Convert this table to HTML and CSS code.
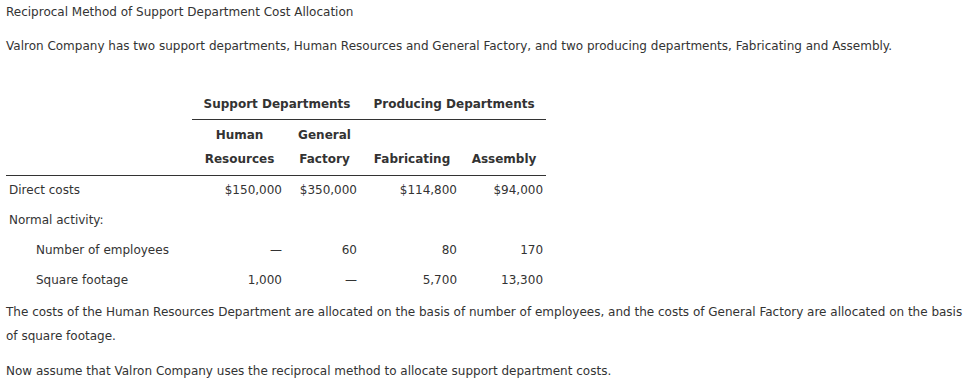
FILE: index.html
```html
<html lang="en">
<head>
<meta charset="UTF-8">
<meta name="viewport" content="width=device-width, initial-scale=1.0">
<title>Reciprocal Method</title>
<link rel="stylesheet" href="styles.css">
</head>
<body>
<div class="problem">
  <p class="title">Reciprocal Method of Support Department Cost Allocation</p>
  <p class="intro">Valron Company has two support departments, Human Resources and General Factory, and two producing departments, Fabricating and Assembly.</p>

  <table class="costs">
    <colgroup>
      <col class="c-label">
      <col class="c-hr">
      <col class="c-gf">
      <col class="c-fab">
      <col class="c-asm">
    </colgroup>
    <tr class="group-row">
      <th></th>
      <th colspan="2" class="group">Support Departments</th>
      <th colspan="2" class="group">Producing Departments</th>
    </tr>
    <tr class="dept-row">
      <th></th>
      <th>Human<br>Resources</th>
      <th>General<br>Factory</th>
      <th>Fabricating</th>
      <th>Assembly</th>
    </tr>
    <tr>
      <td>Direct costs</td>
      <td class="num">$150,000</td>
      <td class="num">$350,000</td>
      <td class="num">$114,800</td>
      <td class="num">$94,000</td>
    </tr>
    <tr>
      <td colspan="5">Normal activity:</td>
    </tr>
    <tr>
      <td class="indent">Number of employees</td>
      <td class="num">&mdash;</td>
      <td class="num">60</td>
      <td class="num">80</td>
      <td class="num">170</td>
    </tr>
    <tr>
      <td class="indent">Square footage</td>
      <td class="num">1,000</td>
      <td class="num">&mdash;</td>
      <td class="num">5,700</td>
      <td class="num">13,300</td>
    </tr>
  </table>

  <p class="note">The costs of the Human Resources Department are allocated on the basis of number of employees, and the costs of General Factory are allocated on the basis of square footage.</p>
  <p class="note last">Now assume that Valron Company uses the reciprocal method to allocate support department costs.</p>
</div>
</body>
</html>
```

FILE: styles.css
```css
body {
  font-family: Verdana, "DejaVu Sans", sans-serif;
  font-size: 12px;
  color: #333;
  background-color: #fff;
  margin: 0;
  padding: 0 2px 0 6px;
}

.problem p {
  margin: 0;
  line-height: 24px;
}

.problem .intro {
  margin-top: 10px;
}

.costs {
  font-family: inherit;
  font-size: 12px;
  color: #333;
  border-collapse: collapse;
  table-layout: fixed;
  width: 540px;
  margin-top: 31px;
}

.c-label { width: 186px; }
.c-hr { width: 95px; }
.c-gf { width: 75px; }
.c-fab { width: 100px; }
.c-asm { width: 84px; }

.costs th {
  font-weight: bold;
  text-align: center;
  white-space: nowrap;
  padding: 0;
}

.group-row th {
  height: 30px;
  vertical-align: middle;
}

.group-row .group {
  border-bottom: 1px solid #333;
}

.dept-row th {
  line-height: 24px;
  padding: 3px 0 4px;
  vertical-align: bottom;
  border-bottom: 1px solid #333;
}

.costs td {
  height: 30px;
  padding: 0 3px;
  white-space: nowrap;
  vertical-align: middle;
}

.costs td.num {
  text-align: right;
  padding-right: 5px;
}

.costs td.num:last-child {
  padding-right: 3px;
}

.costs td.indent {
  padding-left: 30px;
}

.problem .note {
  margin-top: 5px;
}

.problem .note.last {
  margin-top: 11px;
}
```
